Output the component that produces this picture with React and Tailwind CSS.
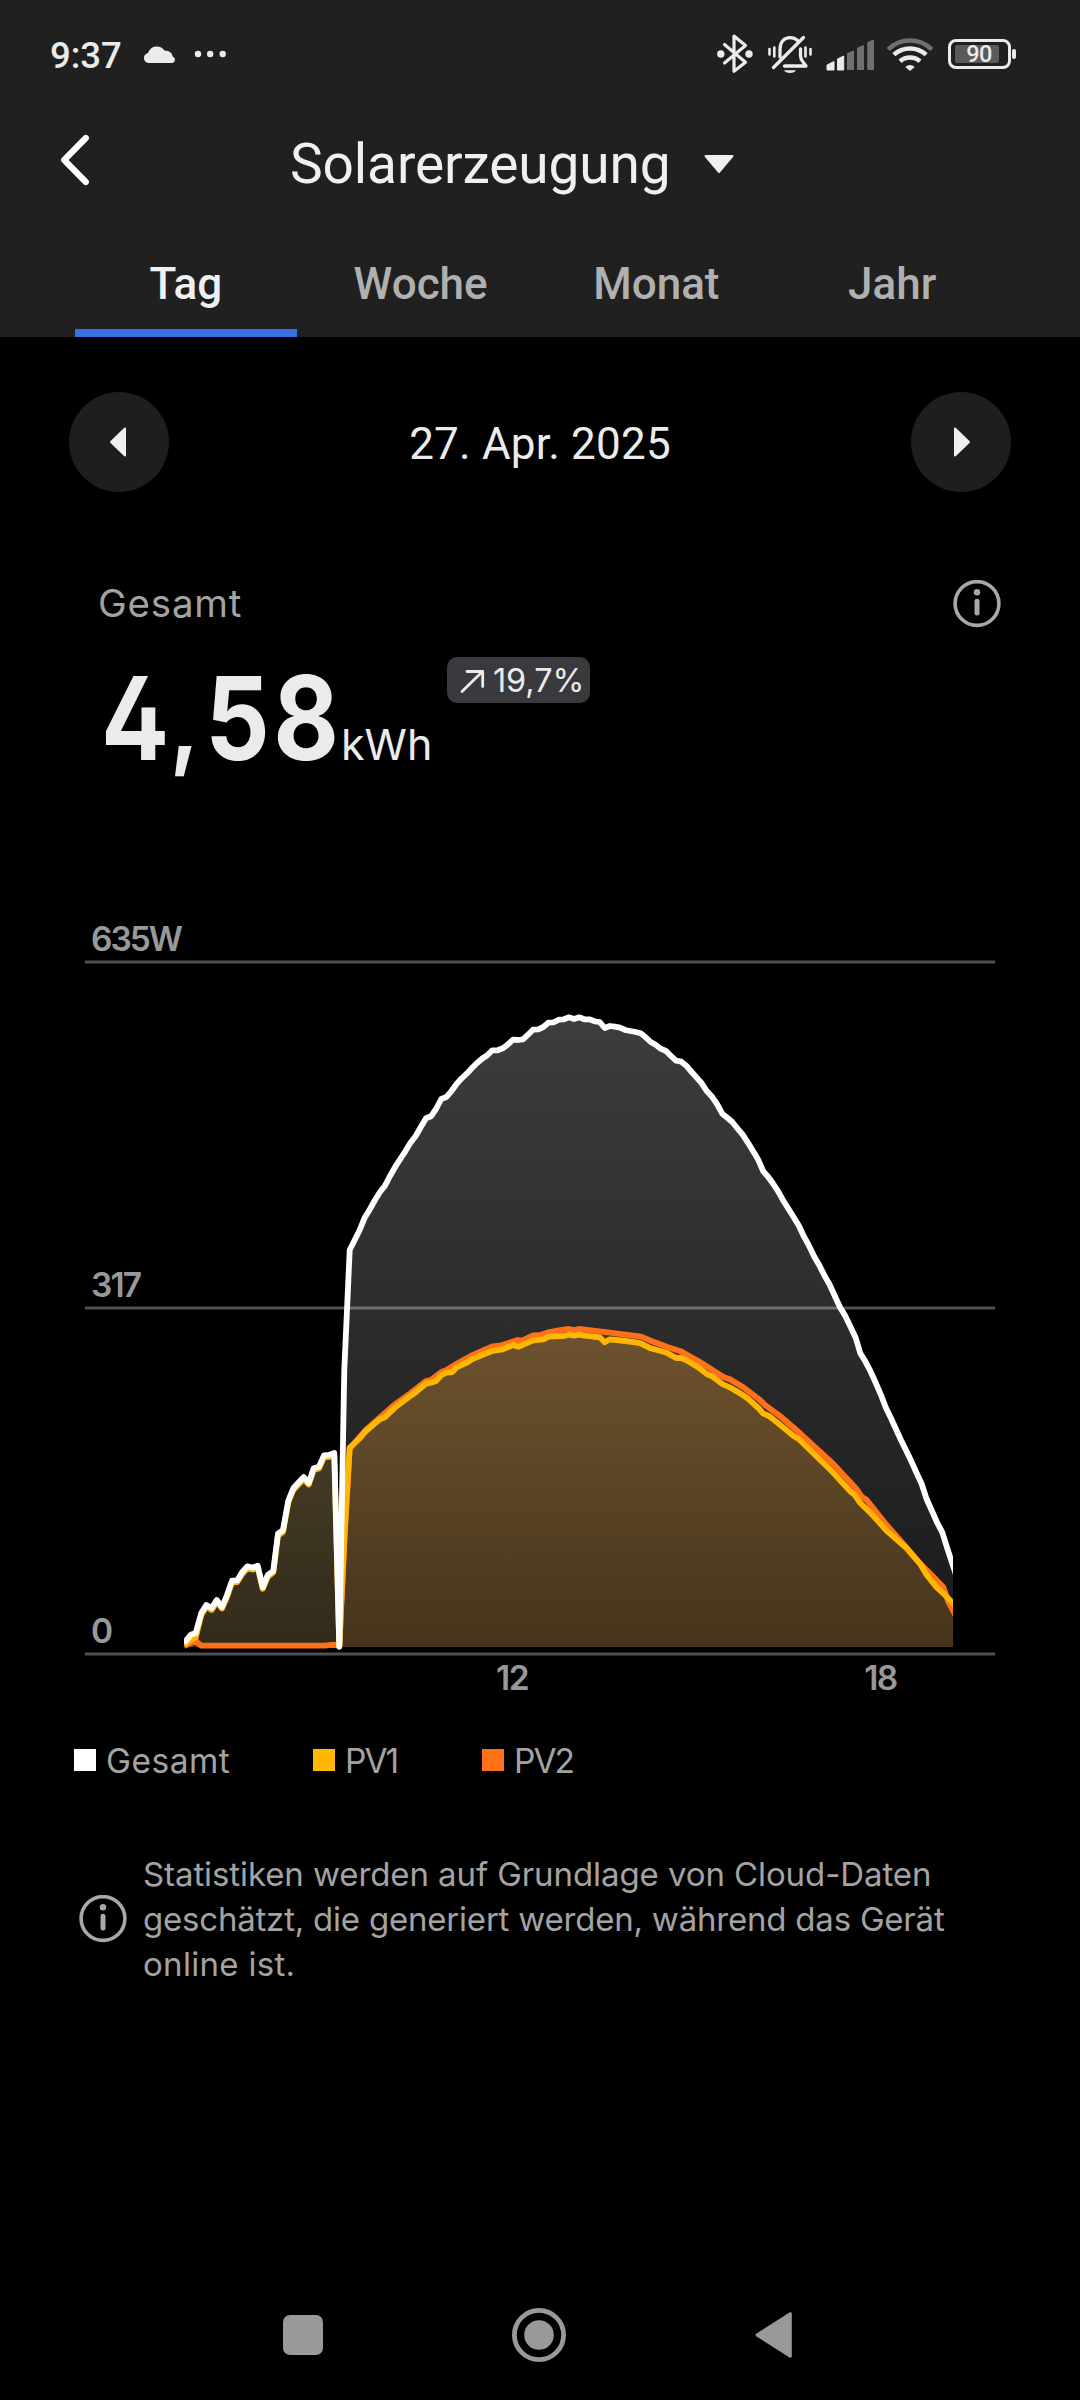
import React from "react";

const TOTAL =
  "184,1643.3 190.7,1634.7 195.7,1633 201.3,1613 206.3,1605 211.7,1608 216.7,1600 222,1607 227,1595 232,1580.7 237.3,1580.3 242.3,1572 247.3,1566.3 252.7,1567.7 257.7,1565.7 262.7,1587.3 267.7,1575 273.3,1570.7 278,1533.7 283,1530 288.3,1500.7 293.3,1488.3 298.3,1482.7 303.7,1477 308.7,1483 313.7,1468.3 319,1466.7 324,1455.3 329,1455 334.3,1453 339.3,1646.5 344.3,1370 349.7,1250 354.7,1240 359.7,1230 364.7,1217.7 370,1209 375,1200 380,1192 385,1185.7 390,1176 395.3,1166.7 400.3,1159 405.3,1151.3 410.3,1143 415.7,1136 420.7,1127.3 426,1118.3 431,1116.3 436,1109 441.3,1099 446.3,1097 451.3,1091.3 456.7,1083.7 461.7,1078.3 466.7,1073.7 472,1068 477,1063 482,1058.7 487.3,1055.3 492.3,1050.3 497.7,1050.3 502.7,1048.3 507.7,1044.7 513,1039.7 518,1040 523,1039.3 528,1034.7 533,1029.7 538.3,1029.3 543.3,1027 548.3,1022.7 553.7,1022.3 558.7,1019.7 564,1019.3 569,1017.3 574,1019 579.3,1017.3 584.3,1019.3 589.3,1019.3 594.7,1021.3 599.7,1022 604.7,1028 610,1026 615,1026.7 620,1027.7 625.3,1030 630.3,1031 635.7,1032 640.7,1033.3 645.7,1037.3 650.7,1042 656,1045 660.7,1048.7 666,1051 671,1056 676,1060.7 681.3,1061.7 686.3,1065.7 691.7,1072 696.7,1077.7 701.7,1083.3 706.7,1091 712,1096.7 717,1104 722.3,1113.7 727.3,1117.7 732.3,1122 737.7,1128.7 742.7,1134.7 747.7,1142.3 753,1151 758,1159.3 763.3,1171.3 768.3,1177 773.3,1184 778.3,1191.7 783.7,1201.3 788.7,1209.3 793.7,1217.3 799,1226 804,1236.7 809,1245.7 814.3,1256.7 819.3,1265.3 824.7,1276 829.7,1284.7 834.7,1295.7 840,1307.3 845.3,1316 850.7,1327.3 855.7,1337.7 860.3,1353.3 865.3,1361.3 870.7,1371.7 875.7,1382.7 880.7,1394.3 886,1408 891,1418.3 896,1429.3 901.3,1440.7 906.3,1450.7 911.3,1461.3 916.7,1473.3 921.7,1484 926.7,1499.3 932,1511 937,1522.3 942.3,1532.3 947.3,1548.3 958,1581";

const PV1 =
  "184,1645 190.7,1640 195.7,1637.5 201.3,1615 206.3,1607 211.7,1610 216.7,1602 222,1608.5 227,1597 232,1582.5 237.3,1582 242.3,1574 247.3,1568.3 252.7,1569.5 257.7,1567.5 262.7,1588.8 267.7,1577 273.3,1572.5 278,1535.5 283,1532 288.3,1502.5 293.3,1490 298.3,1484.7 303.7,1479 308.7,1484.5 313.7,1470 319,1468.5 324,1457 329,1457 334.3,1456 339.3,1646.5 344.5,1535 349.7,1447.7 359.7,1438.3 364.7,1432.3 375,1423.3 380,1419.3 385,1417.3 390,1412.3 395.3,1407.3 405.3,1399.7 410.3,1396 415.7,1392.3 420.7,1388 426,1383.7 431,1382.7 436,1381 441.3,1375.3 446.3,1372.7 452.3,1372 456.7,1367.3 466.7,1362.7 472,1359.3 482,1355 492.3,1351 502.7,1349.3 513,1345 518.3,1346.7 523.3,1344.7 533.3,1340.3 543.3,1339.3 548.7,1336.7 564,1336 569,1334.7 574,1335.7 579.3,1334.7 584.3,1335.7 599.7,1337.3 604.7,1342.3 610,1339.3 625.3,1341 635.7,1342.3 640.7,1343.3 650.7,1348.3 666.7,1352.7 676,1358 681.3,1358 686.7,1360.3 699.3,1368 706.7,1374 712,1376.3 722.3,1384 732.3,1388.7 742.7,1395 747.7,1398.3 758.3,1408 763,1413.3 770,1416.7 780,1424.7 793.3,1435.7 798.7,1439 813.3,1453.3 830,1469.3 850,1491 855,1495.3 860.3,1503 870,1512.3 886.7,1530.7 906.7,1548.3 920.7,1564.7 926.7,1575 936.7,1587.3 943.3,1593.3 958,1608.5";

const PV2 =
  "184,1646 190.7,1643 195.7,1641 201.3,1645.7 325,1645.7 330,1645 337,1645 339.3,1646.5 344.5,1538 349.7,1448.7 364.7,1431 380,1417.3 395.3,1404 410.3,1393.3 426,1381 431,1379.7 441.3,1372 446.7,1370 456.7,1363.7 472,1355.3 492.3,1346.3 500,1345.7 517.7,1340 522,1340.7 533.3,1335.3 540.7,1335 548.3,1332.3 558.7,1330.3 569,1329 574,1330 579.3,1329 593.3,1330.7 610,1332.7 625.3,1334.7 641.3,1336.7 650.7,1340.7 666.7,1346.7 680,1350.9 700,1362 723.3,1377 730,1379.3 743.3,1387.3 760,1400 765,1405 780,1416 800,1433.3 833.3,1464 856.7,1489.3 861.7,1496.7 866.7,1500 886.7,1525 903.3,1544 920,1563.3 933.3,1576.7 943.3,1587.3 948.3,1601.7 958,1620";

// Drawing order: the total lies on top.
const SERIES = [
  { id: "pv2", color: "#ff7018", points: PV2 },
  { id: "pv1", color: "#ffb704", points: PV1 },
  { id: "total", color: "#ffffff", points: TOTAL },
];

function StatusBar() {
  return (
    <div className="flex h-[108px] items-center pl-[50px] pr-[64px] text-[#ebebeb]">
      <span className="w-[93px] pt-[3px] text-[36.5px] font-medium leading-[48px]">9:37</span>
      <svg className="h-6 w-[34px]" viewBox="143 41 34 24" fill="currentColor">
        <path d="M148 62a5 5 0 0 1-1-9.500c1-.3 1-.3 1.300-1.200A9.300 9.300 0 0 1 164.500 49.500c5 .2 7.500 2.500 8.200 6A3.400 3.400 0 0 1 172.500 62Z" />
      </svg>
      <svg className="ml-[17px] h-6 w-8" viewBox="194 42 32 24" fill="currentColor">
        <circle cx="198" cy="54" r="3.2" />
        <circle cx="210.200" cy="54" r="3.200" />
        <circle cx="222.700" cy="54" r="3.200" />
      </svg>

      <svg className="ml-auto h-12 w-10" viewBox="715 30 40 48" fill="none" stroke="currentColor" strokeWidth="3.200" strokeLinejoin="round" strokeLinecap="round">
        <path d="M724.500 44.500 745.500 62.300 734 71.300V36L745.500 45.500 724.500 63" />
        <circle cx="720.800" cy="54" r="3.700" fill="currentColor" stroke="none" />
        <circle cx="749" cy="54" r="3.700" fill="currentColor" stroke="none" />
      </svg>
      <svg className="ml-3 h-12 w-[46px]" viewBox="767 30 46 48" fill="none" stroke="currentColor" strokeWidth="3.300" strokeLinecap="round" strokeLinejoin="round">
        <path d="M780 57V50C780 42 784 37.700 790 37.700c3.500 0 6 1 8 3.300" />
        <path d="M800.500 49V56c0 5 3.500 6.500 5.500 10H784.500" />
        <path d="M803.500 37.500 773.500 67.500" />
        <path d="M784 70.300h12a6.500 4.500 0 0 1-12 0Z" fill="currentColor" stroke="none" />
        <path d="M769.500 49v5.500M774.300 47.500v9M805.500 47.500v9M810.500 49v5.500" strokeWidth="2.600" />
      </svg>
      <svg className="ml-[12px] h-12 w-[50px]" viewBox="825 30 50 48" fill="currentColor">
        <path d="M827 65 834 61.500V70H827Z" stroke="currentColor" strokeLinejoin="round" />
        <path d="M837.500 59 843.700 56V70H837.500Z" stroke="currentColor" strokeLinejoin="round" />
        <g fill="#707070" stroke="#707070" strokeLinejoin="round">
          <path d="M847.500 53.500 853.500 51V69.500H847.500Z" />
          <path d="M857.500 48 863.500 45.500V69.500H857.500Z" />
          <path d="M867.800 42.500 873.500 40V69.500H867.800Z" />
        </g>
      </svg>
      <svg className="ml-[11px] h-12 w-[48px]" viewBox="886 30 48 48" fill="none" stroke="currentColor" strokeWidth="4.500">
        <path d="M888.200 49.500a31 31 0 0 1 43.600 0" stroke="#707070" />
        <path d="M893.800 54.700a24 24 0 0 1 32.400 0" />
        <path d="M900 61.200a15 15 0 0 1 20 0" />
        <path d="M910 71 905.300 67a6.500 6.500 0 0 1 9.400 0Z" fill="currentColor" stroke="none" />
      </svg>
      <div className="ml-[14px] flex items-center gap-px">
        <div className="flex h-[30px] w-[63px] items-center rounded-[8px] border-[3px] border-[#ebebeb] pl-1">
          <div className="h-[18px] w-[44px] rounded-[2px] bg-[#5a5a5a] text-center text-[23.500px] font-medium leading-[19px] tracking-[-0.5px]">
            <span className="ml-[4px]">90</span>
          </div>
        </div>
        <div className="h-[10px] w-1 rounded-[2px] bg-[#ebebeb]" />
      </div>
    </div>
  );
}

function TitleRow() {
  return (
    <div className="flex h-[104px] items-center pl-[58px]">
      <svg className="h-14 w-9" viewBox="58 132 36 56" fill="none" stroke="#fff" strokeWidth="6.200" strokeLinecap="round" strokeLinejoin="round">
        <path d="M85.800 138 64.200 160 85.800 182" />
      </svg>
      <h1 className="ml-[196px] w-[413px] whitespace-nowrap pt-2 text-[55px] leading-[70px] tracking-[-0.1px] text-[#f0f0f0]">Solarerzeugung</h1>
      <svg className="mt-2 h-5 w-8" viewBox="702 154 32 20" fill="#f0f0f0" stroke="#f0f0f0" strokeWidth="2" strokeLinejoin="round">
        <path d="M704.500 156h27L718 172Z" />
      </svg>
    </div>
  );
}

function Tab({ label, active }) {
  return (
    <div className="flex flex-col items-center pt-[27px]">
      <span className={active ? "text-[44px] font-medium leading-[90px] text-[#f0f0f0]" : "mr-[2px] text-[44px] font-medium leading-[90px] text-[#b0b0b0]"}>
        {label}
      </span>
      <div className={active ? "h-2 w-[222px] bg-[#3a6fe3]" : "h-2 w-[222px]"} />
    </div>
  );
}

function RoundButton({ path }) {
  return (
    <div className="flex h-[100px] w-[100px] items-center justify-center rounded-full bg-[#1e1e20]">
      <svg className="h-8 w-6" viewBox="0 0 24 32" fill="#f0f0f0" stroke="#f0f0f0" strokeWidth="2" strokeLinejoin="round">
        <path d={path} />
      </svg>
    </div>
  );
}

function Info() {
  return (
    <svg className="h-12 w-12 shrink-0" viewBox="0 0 48 48" fill="none" stroke="#a8a8a8">
      <circle cx="24" cy="23.500" r="21.900" strokeWidth="3.600" />
      <circle cx="24" cy="12.300" r="3.200" fill="#a8a8a8" stroke="none" />
      <path d="M24 21.300V33" strokeWidth="5" strokeLinecap="round" />
    </svg>
  );
}

function Chart() {
  return (
    <svg className="block h-[810px] w-[1080px]" viewBox="0 900 1080 810">
      <defs>
        {SERIES.map((s) => (
          <linearGradient key={s.id} id={s.id} gradientUnits="userSpaceOnUse" x1="0" y1="962" x2="0" y2="1654">
            <stop offset="0" stopColor={s.color} stopOpacity="0.25" />
            <stop offset="1" stopColor={s.color} stopOpacity="0.1" />
          </linearGradient>
        ))}
        <clipPath id="plot">
          <rect x="184" y="962" width="769" height="690" />
        </clipPath>
      </defs>
      <path d="M85 962H995M85 1308H995M85 1654H995" stroke="#505050" strokeWidth="3.200" />
      <g clipPath="url(#plot)">
        {SERIES.map((s) => (
          <polygon key={s.id} points={"184,1647 " + s.points + " 958,1647"} fill={"url(#" + s.id + ")"} />
        ))}
        {SERIES.map((s) => (
          <polyline key={s.id} points={s.points} fill="none" stroke={s.color} strokeWidth="5.800" strokeLinejoin="round" />
        ))}
      </g>
      <g fill="#999" fontFamily="Inter, sans-serif" fontSize="33.500" fontWeight="600">
        <text x="91" y="951" textLength="92">635W</text>
        <text x="91" y="1297" textLength="51">317</text>
        <text x="91" y="1643">0</text>
        <text x="512" y="1690" textAnchor="middle" letterSpacing="-1.500">12</text>
        <text x="880.500" y="1690" textAnchor="middle" letterSpacing="-1.500">18</text>
      </g>
    </svg>
  );
}

export default function App() {
  return (
    <div className="flex h-[2400px] w-[1080px] flex-col overflow-hidden bg-black font-['Roboto',sans-serif] text-[#ebebeb]">
      <header className="h-[337px] bg-[#202020]">
        <StatusBar />
        <TitleRow />
        <nav className="grid grid-cols-4 pl-[68px] pr-[69px]">
          <Tab label="Tag" active />
          <Tab label="Woche" />
          <Tab label="Monat" />
          <Tab label="Jahr" />
        </nav>
      </header>

      <div className="mx-[69px] mt-[55px] flex items-center justify-between">
        <RoundButton path="M18 2.500V29.500L4 16Z" />
        <span className="pt-1 text-[44px] leading-[60px] tracking-[0.2px]">27. Apr. 2025</span>
        <RoundButton path="M6 2.500V29.500L20 16Z" />
      </div>

      <div className="mt-[88px] flex h-12 items-center justify-between pl-[98px] pr-[79px]">
        <span className="-mt-[2px] font-['Inter',sans-serif] text-[38.500px] leading-[48px] tracking-[0.8px] text-[#a3a3a3]">Gesamt</span>
        <Info />
      </div>

      <div className="flex h-[272px] items-start pl-[98px] pt-[29px] font-['Inter',sans-serif]">
        <div className="flex items-baseline pt-[1px] leading-[120px]">
          <div className="w-[243px]">
            <span className="ml-[3px] inline-block origin-left scale-x-[0.87] whitespace-nowrap text-[116px] font-bold leading-[120px] tracking-[4px] [font-feature-settings:'cv02']">
              4<span className="relative -top-[3px] -ml-[3px] mr-[3px] text-[100px]">,</span>58
            </span>
          </div>
          <span className="w-[106px] text-[43px]">kWh</span>
        </div>
        <div className="flex h-[46px] w-[143px] items-center rounded-[10px] bg-[#3a3a3e] pl-3">
          <svg className="h-7 w-7 shrink-0" viewBox="459 667 28 28" fill="none" stroke="#ebebeb" strokeWidth="2.800" strokeLinecap="round" strokeLinejoin="round">
            <path d="M462 692.500 482.500 672.500M467 672.500H482.700V687.500" />
          </svg>
          <span className="ml-[6px] whitespace-nowrap pt-[2px] text-[32.500px] leading-[46px] tracking-[-0.1px]">19,7%</span>
        </div>
      </div>

      <Chart />

      <div className="mt-[30px] flex h-10 items-center pl-[74px] font-['Inter',sans-serif] text-[33.500px] leading-10 text-[#a3a3a3]">
        <div className="flex w-[239px] items-center gap-[10px]">
          <i className="h-[22px] w-[22px] bg-white" />
          <span className="pt-[2px] tracking-[0.5px]">Gesamt</span>
        </div>
        <div className="flex w-[169px] items-center gap-[10px]">
          <i className="h-[22px] w-[22px] bg-[#ffb704]" />
          <span className="pt-[2px] tracking-[-2px]">PV1</span>
        </div>
        <div className="flex items-center gap-[10px]">
          <i className="h-[22px] w-[22px] bg-[#ff7018]" />
          <span className="pt-[2px] tracking-[-2px]">PV2</span>
        </div>
      </div>

      <div className="mt-[71px] flex items-center pl-[79px] font-['Inter',sans-serif]">
        <Info />
        <p className="ml-[16px] whitespace-nowrap pt-px text-[33px] leading-[45px] text-[#a3a3a3]">
          <span className="block tracking-[-0.09px]">Statistiken werden auf Grundlage von Cloud-Daten</span>
          <span className="block tracking-[-0.21px]">geschätzt, die generiert werden, während das Gerät</span>
          <span className="block tracking-[0.3px]">online ist.</span>
        </p>
      </div>

      <footer className="mt-auto flex h-[130px] items-center pl-[283px]">
        <div className="h-10 w-10 rounded-[7px] bg-[#999]" />
        <svg className="ml-[188px] h-14 w-14" viewBox="0 0 56 56">
          <circle cx="28" cy="28" r="24.600" fill="none" stroke="#999" strokeWidth="4.800" />
          <circle cx="28" cy="28" r="14.800" fill="#999" />
        </svg>
        <svg className="ml-[187px] h-12 w-10" viewBox="754 2311 40 48" fill="#999" stroke="#999" strokeWidth="3" strokeLinejoin="round">
          <path d="M757 2335 790.300 2313.700V2356.300Z" />
        </svg>
      </footer>
    </div>
  );
}
